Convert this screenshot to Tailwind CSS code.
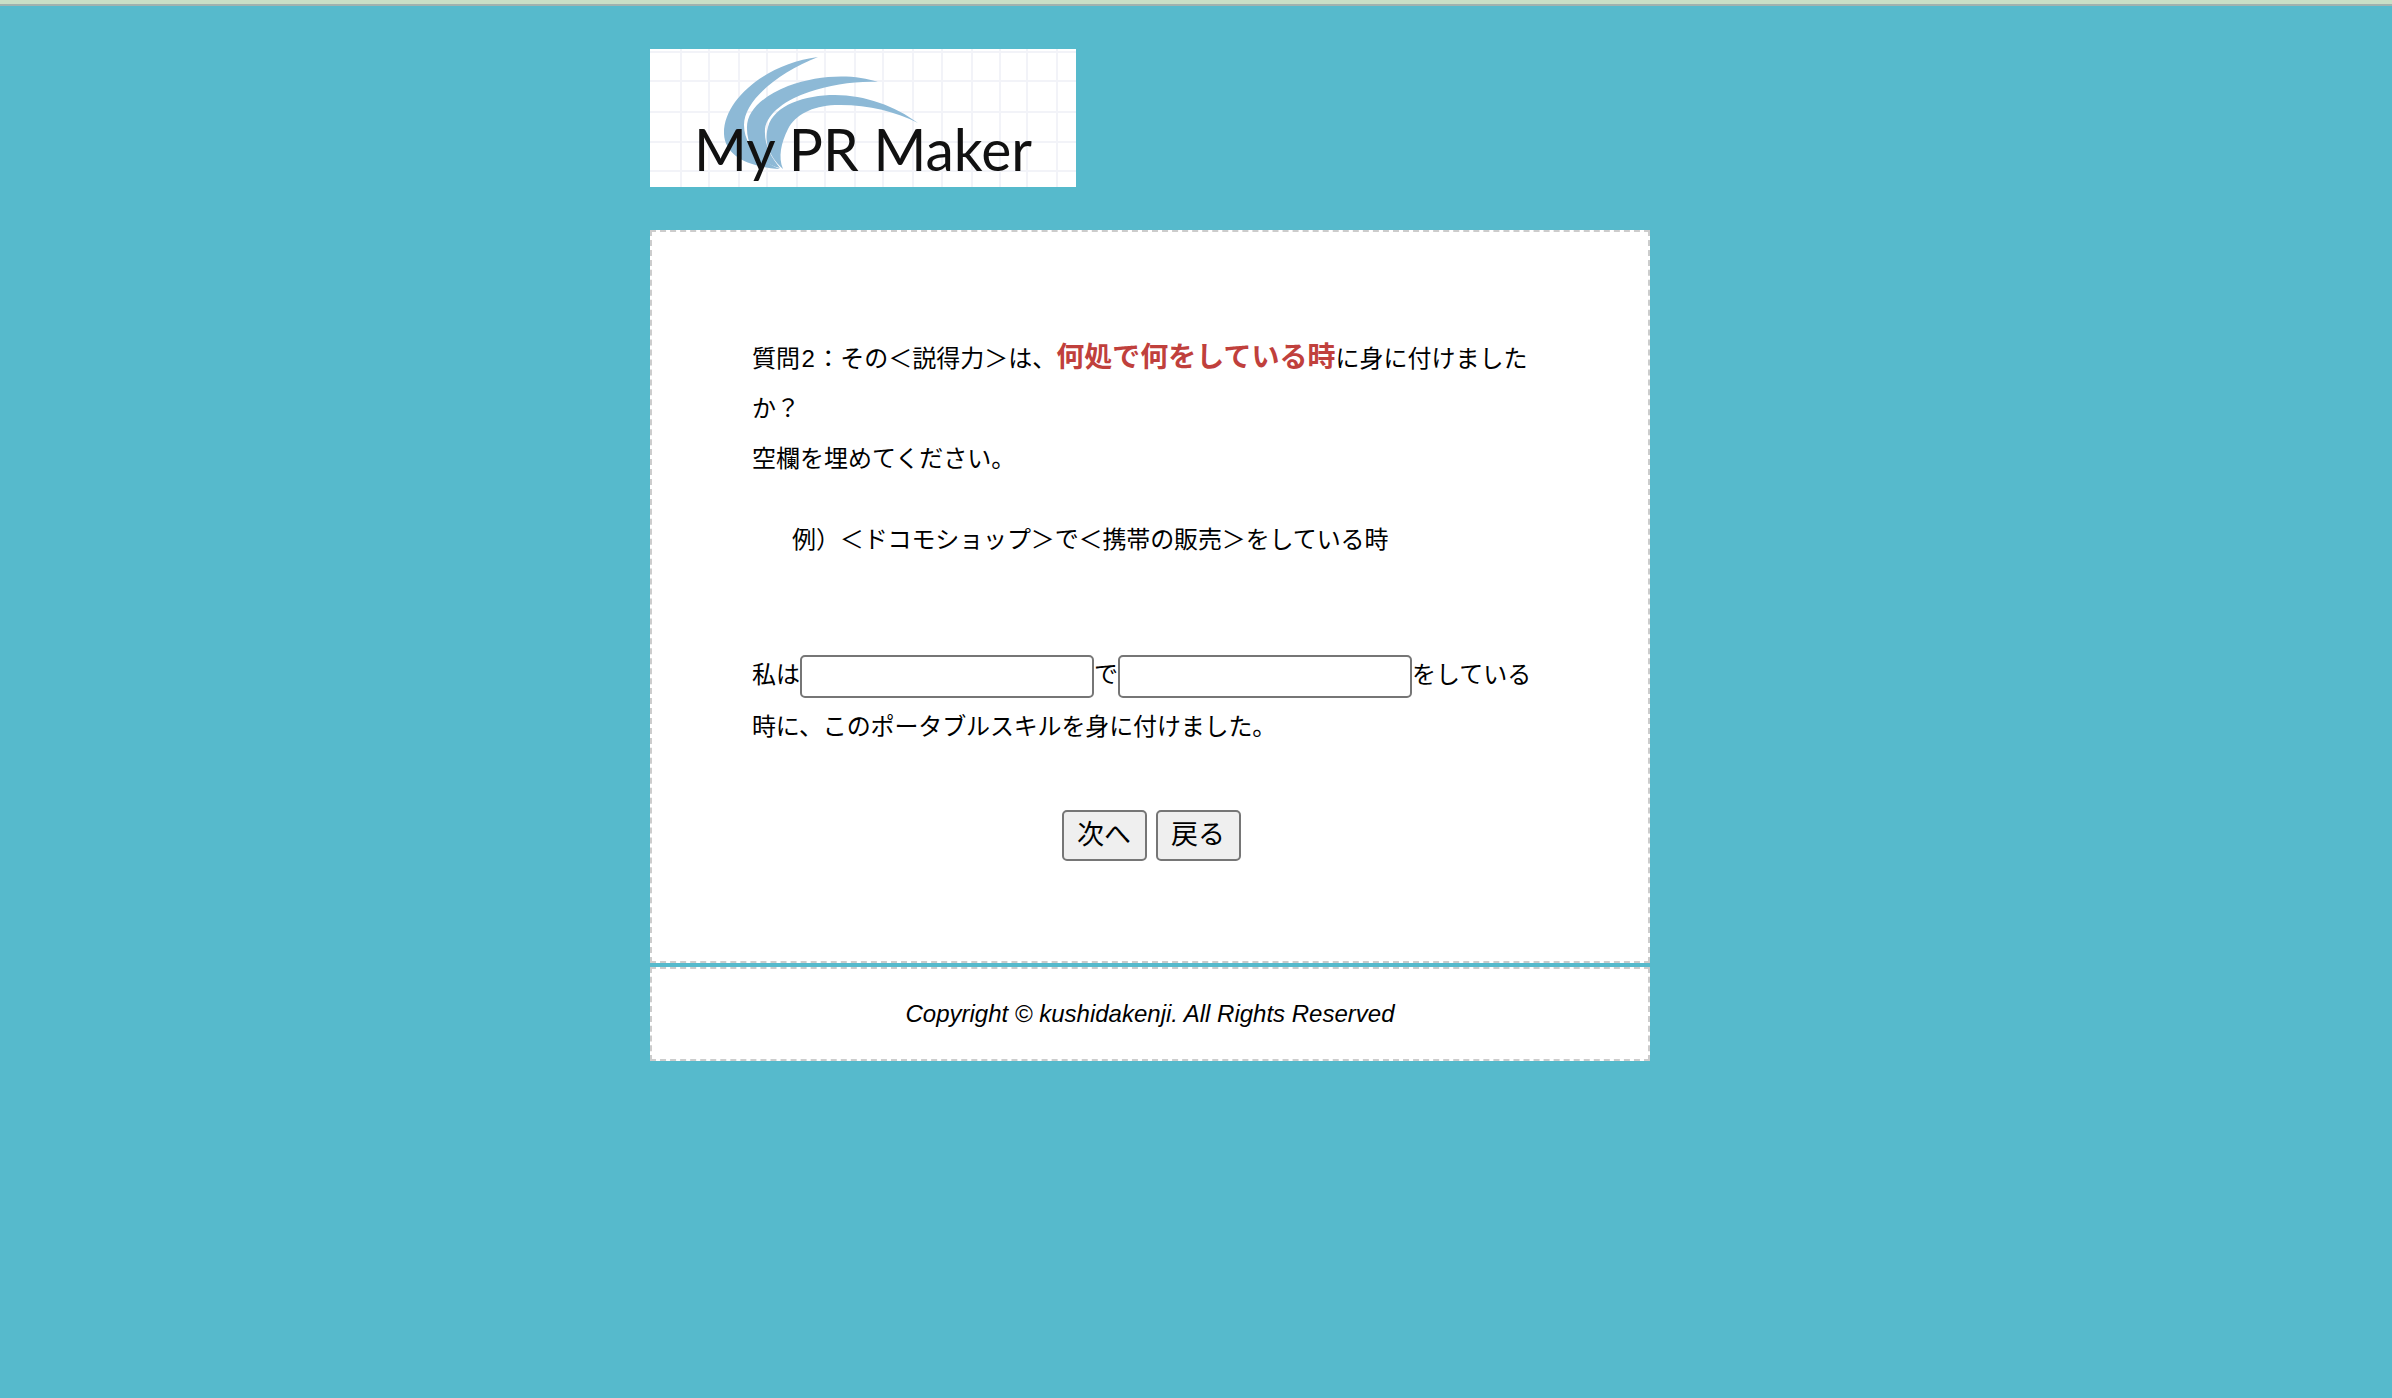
<!DOCTYPE html>
<html lang="ja">
  <head>
    <meta charset="utf-8" />
    <title>My PR Maker</title>
    <script src="https://cdn.jsdelivr.net/npm/@tailwindcss/browser@4"></script>
  </head>
  <body class="min-h-screen bg-[#56bacc] text-black font-['Liberation_Sans','Noto_Sans_CJK_JP',sans-serif]">
    <div class="h-[6px] bg-[#c8dfc6] border-b-2 border-[#a0b2ae]"></div>

    <div class="ml-[650px] w-[1000px] pt-[43px]">
      <!-- logo -->
      <svg class="block" width="426" height="138" viewBox="0 0 426 138">
        <rect width="426" height="138" fill="#fff" />
        <g stroke="#f2f3f8" stroke-width="2">
          <path d="M31 0V138M59 0V138M89 0V138M117 0V138M147 0V138M175 0V138M205 0V138M233 0V138M263 0V138M292 0V138M322 0V138M350 0V138M377 0V138M407 0V138" />
          <path d="M0 3H426M0 32H426M0 63H426M0 93H426M0 122H426" />
        </g>
        <g fill="#8db9d6">
          <path d="M168 8C118 14 73 50 74 85C75 106 97 118 130 120C110 112 94 96 94 76C94 52 127 24 168 8Z" />
          <path d="M228 33C205 25 170 25 138 37C113 47 96 62 97 80C97 100 112 115 130 119C121 108 114 96 115 80C117 64 137 50 159 43C180 36 205 32 228 33Z" />
          <path d="M268 74C245 57 215 46 185 46C155 46 124 56 118 78C113 96 122 110 133 120C128 108 131 94 138 80C145 66 162 57 185 56C215 55 245 62 268 74Z" />
        </g>
        <text x="44" y="122" font-size="58" textLength="338" lengthAdjust="spacingAndGlyphs" fill="#111" class="font-['Lato',sans-serif]">My PR Maker</text>
      </svg>

      <!-- question -->
      <main class="mt-[43px] h-[733px] bg-white border-2 border-dashed border-[#ccc] pt-[101px] pl-[100px] pr-[98px] text-[24px] leading-[50px]">
        <p>質問<span class="px-[1.5px]">2</span>：その＜説得力＞は、<span class="text-[28px] font-bold text-[#c0403c]">何処で何をしている時</span>に身に付けましたか？<br />空欄を埋めてください。</p>
        <p class="mt-[31px] pl-[40px] tracking-[-0.12px]">例）＜ドコモショップ＞で＜携帯の販売＞をしている時</p>
        <p class="mt-[85px]">私は<input type="text" class="w-[294px] h-[43px] my-[4px] align-middle bg-white border-2 border-[#767676] rounded-[5px]" />で<input type="text" class="w-[294px] h-[43px] my-[4px] align-middle bg-white border-2 border-[#767676] rounded-[5px]" />をしている<span class="tracking-[-0.14px]">時に、このポータブルスキルを身に付けました。</span></p>
        <div class="mt-[58px] flex justify-center gap-[9px]">
          <button class="w-[85px] h-[51px] text-[27px] leading-none bg-[#efefef] border-2 border-[#767676] rounded-[5px]">次へ</button>
          <button class="w-[85px] h-[51px] text-[27px] leading-none bg-[#efefef] border-2 border-[#767676] rounded-[5px]">戻る</button>
        </div>
      </main>

      <footer class="mt-[4px] h-[94px] flex items-center justify-center bg-white border-2 border-dashed border-[#ccc] text-[24px] italic">
        Copyright © kushidakenji. All Rights Reserved
      </footer>
    </div>
  </body>
</html>
